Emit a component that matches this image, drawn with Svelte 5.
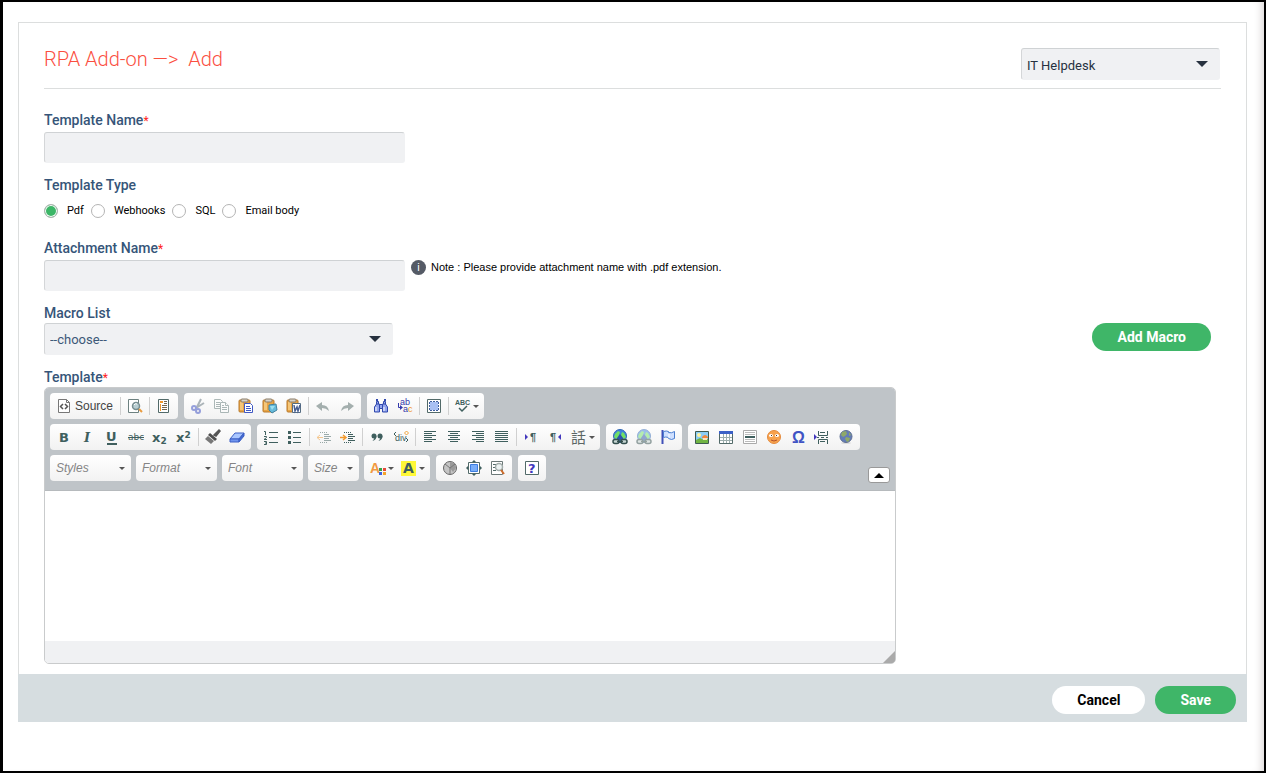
<script>
	let helpdesk = $state('IT Helpdesk');
	let templateName = $state('');
	let templateType = $state('Pdf');
	let attachmentName = $state('');
	let macro = $state('');
	let template = $state('');
	let collapsed = $state(false);

	const types = ['Pdf', 'Webhooks', 'SQL', 'Email body'];

	const teal = '#3f5f5e';
	const clipboard =
		'<rect x="1" y="2" width="11" height="12" rx="1" fill="#e8a445" stroke="#b8792a"/><path d="M2 4h3v8H2z" fill="#f5c678"/><rect x="3" y="1" width="7" height="3" rx="1" fill="#d8d2c8" stroke="#8a7c68"/>';
	const clip = (inner) => clipboard + inner;
	const lines = (rows) =>
		`<path d="${rows.map(([x, w], i) => `M${x} ${2 + i * 2 + 0.5}h${w}`).join('')}" stroke="${teal}"/>`;
	const globe = (opacity) => `<g opacity="${opacity}">
		<circle cx="8" cy="7" r="6.5" fill="#3f83dc" stroke="#3168b4"/>
		<path d="M3 5l3-3 2 1-1 3-1 3-2 1-2-2zM10 3l2 1 2 4-2 2-2-2-1-2z" fill="#72e064"/>
		<path d="M5 9l3-4 3 4v2H5z" fill="#2c55a8"/>
		<rect x="1" y="10.5" width="6" height="4" rx="2" fill="#c7d6d3" stroke="#35504f" stroke-width="1.5"/>
		<rect x="9" y="10.5" width="6" height="4" rx="2" fill="#c7d6d3" stroke="#35504f" stroke-width="1.5"/>
		<path d="M5 12.5h6" stroke="#35504f" stroke-width="1.5"/></g>`;

	const icons = {
		source: '<path d="M2.5 1.5h8l3 3v10h-11z" fill="#fff" stroke="#777"/><path d="M10.5 1.5v3h3" fill="none" stroke="#777"/><path d="M7 6L4.500 8.500 7 11M9 6l2.500 2.500L9 11" fill="none" stroke="#555" stroke-width="1.500"/>',
		preview: '<path d="M1.5 1.500h10v13h-10z" fill="#fff" stroke="#6d8180"/><circle cx="9" cy="8" r="3.500" fill="#b9ced2" stroke="#788e91" stroke-width="1.500"/><path d="M7 7q1-2 3-1" stroke="#fff" fill="none"/><path d="M12 11l3 3" stroke="#e99b3f" stroke-width="2"/>',
		templates: '<path d="M2.500 1.500h10v13h-10z" fill="#fff" stroke="#526a69"/><path d="M4 3h3v2H4z" fill="#f0982d"/><path d="M8 3.500h3M8 5.500h3M6 7.500h5M6 9.500h5M6 11.500h5" stroke="#76664d"/><path d="M4.500 6v7" stroke="#f0982d"/>',
		cut: '<g opacity=".5"><path d="M11 1L7 9M14 5L6 10" stroke="#60717a" stroke-width="2"/><circle cx="4" cy="10" r="2" fill="none" stroke="#3549c0" stroke-width="2"/><circle cx="8" cy="13" r="2" fill="none" stroke="#3549c0" stroke-width="2"/></g>',
		copy: '<g opacity=".5" fill="#fff" stroke="#607877"><path d="M.5 1.500h6l2 2v7h-8z"/><path d="M2 4.500h4M2 6.500h4M2 8.500h4"/><path d="M6.500 4.500h5l3 3v7h-8z"/><path d="M11.500 4.500v3h3M8 7.500h2M8 9.500h5M8 11.500h5"/></g>',
		paste: clip('<path d="M6.500 5.500h6l2 2v7h-8z" fill="#fff" stroke="#4059c4"/><path d="M8 8.500h4M8 10.500h5M8 12.500h5" stroke="#4059c4"/>'),
		pastetext: clip('<path d="M7 7l7-1 1 6-5 3-3-3z" fill="#66bada" stroke="#4283a0"/><path d="M8 8h5l-3 4" fill="#9de0ef"/>'),
		pasteword: clip('<path d="M6.500 5.500h8v9h-8z" fill="#fff" stroke="#566d82"/><path d="M8 7l1 6 2-4 1 4 2-6" fill="none" stroke="#485f92" stroke-width="1.500"/>'),
		undo: '<path d="M1 8l6-4v3q6 0 7 6-3-3-7-3v3z" fill="#a4afae"/>',
		redo: '<path d="M15 8L9 4v3q-6 0-7 6 3-3 7-3v3z" fill="#a4afae"/>',
		find: '<g fill="#93a5ed" stroke="#3048ad"><path d="M3.500 3.500h2v3h-2zM10.500 3.500h2v3h-2z"/><path d="M3.500 6l-2 3v5h5V6zM12.500 6l2 3v5h-5V6z"/><path d="M6.500 6.500h3v4h-3z"/></g><path d="M3 9v4M11 9v4" stroke="#fff"/><path d="M4 1v2M12 1v2" stroke="#3048ad" stroke-width="2"/>',
		replace: '<text x="3" y="7" font-size="9" fill="#3338ac">ab<tspan x="6" dy="7">a</tspan><tspan fill="#ef962c">c</tspan></text><path d="M1.500 5v4.500H4" fill="none" stroke="#3338ac"/><path d="M3 7l3 2.500L3 12z" fill="#3338ac"/>',
		selectall: '<path d="M1.500 1.500h13v13h-13z" fill="#fff" stroke="#526a69"/><rect x="4" y="4" width="8" height="8" fill="#a9c0f3"/><path d="M3.500 4v8M12.500 4v8M4 3.500h8M4 12.500h8" stroke="#3f5f9e" stroke-dasharray="2 1"/>',
		bold: `<text x="3" y="13" font-size="13" font-weight="900" font-family="DejaVu Sans" fill="${teal}">B</text>`,
		italic: `<text x="4" y="13" font-size="13" font-weight="700" font-style="italic" font-family="DejaVu Serif" fill="${teal}">I</text>`,
		underline: `<text x="2" y="12" font-size="13" font-weight="700" font-family="DejaVu Sans" fill="${teal}">U</text><path d="M3 15h10" stroke="${teal}" stroke-width="2"/>`,
		strike: `<text x="0" y="11" font-size="9" font-family="DejaVu Sans" fill="${teal}">abc</text><path d="M0 8.500h16" stroke="${teal}"/>`,
		sub: `<text x="0" y="13" font-size="13" font-weight="700" font-family="DejaVu Sans" fill="${teal}">x<tspan font-size="9" dy="2">2</tspan></text>`,
		sup: `<text x="0" y="13" font-size="13" font-weight="700" font-family="DejaVu Sans" fill="${teal}">x<tspan font-size="9" dy="-4">2</tspan></text>`,
		brush: '<path d="M14 1l1 1-4 5-2-1z" fill="#555" stroke="#555" stroke-width="1.500"/><path d="M5 4l7 6-2 2-7-6z" fill="#4e4e4e"/><path d="M3 7l6 5-3 3-6-5z" fill="#777"/>',
		eraser: '<path d="M6 4h9l-5 6H1z" fill="#a9c6ff" stroke="#3c5fc5"/><path d="M1 10h9v3H1z" fill="#6f94ee" stroke="#3c5fc5"/><path d="M10 10l5-6v3l-5 6z" fill="#446bd2" stroke="#3c5fc5"/>',
		numbered: `<path d="M1 2.500h1.500V6M1 7.500h2.500v1L1 10.500h3M1 12.500h2.500v3H1M2 14h1" fill="none" stroke="${teal}"/><path d="M6 3.500h9M6 8.500h9M6 13.500h9" stroke="${teal}"/>`,
		bulleted: `<path d="M1 2h3v3H1zM1 7h3v3H1zM1 12h3v3H1z" fill="${teal}"/><path d="M6 3.500h8M6 8.500h8M6 13.500h8" stroke="${teal}"/>`,
		outdent: `<g opacity=".5"><path d="M4 3.500h8M4 13.500h8" stroke="${teal}" stroke-dasharray="1 1"/><path d="M8 5.500h5M8 7.500h7M8 9.500h5M8 11.500h7" stroke="${teal}"/><path d="M7 8.500H1M4 6L1 8.500 4 11" fill="none" stroke="#f39a2d"/></g>`,
		indent: `<path d="M4 3.500h8M4 13.500h8" stroke="${teal}" stroke-dasharray="1 1"/><path d="M8 5.500h5M8 7.500h7M8 9.500h5M8 11.500h7" stroke="${teal}"/><path d="M0 8.500h6M3 6l3 2.500L3 11" fill="none" stroke="#f39a2d" stroke-width="1.500"/>`,
		quote: `<g fill="${teal}"><circle cx="5" cy="7" r="2.500"/><path d="M7.500 7q0 4-4 5 2-2 2-4z"/><circle cx="11" cy="7" r="2.500"/><path d="M13.500 7q0 4-4 5 2-2 2-4z"/></g>`,
		div: `<text x="2" y="12" font-size="9" fill="${teal}">div</text><path d="M3 3L1 5l2 2M13 9l2 2-2 2" fill="none" stroke="${teal}"/><path d="M13.500 2l2 2-2 2-2-2z" fill="none" stroke="#f0a33a"/>`,
		left: lines([[2, 12], [2, 8], [2, 12], [2, 8], [2, 12], [2, 8]]),
		center: lines([[2, 12], [4, 8], [2, 12], [4, 8], [2, 12], [4, 8]]),
		right: lines([[2, 12], [6, 8], [2, 12], [6, 8], [2, 12], [6, 8]]),
		justify: lines([[1, 13], [1, 13], [1, 13], [1, 13], [1, 13], [1, 13]]),
		ltr: `<path d="M2 5l3 3-3 3z" fill="#4338bd"/><text x="7" y="12" font-size="11" font-weight="700" fill="${teal}">¶</text>`,
		rtl: `<text x="3" y="12" font-size="11" font-weight="700" fill="${teal}">¶</text><path d="M14 5l-3 3 3 3z" fill="#4338bd"/>`,
		language: '<text x="0" y="14" font-size="15" font-family="Noto Sans CJK TC" fill="#5b6665">話</text>',
		link: globe(1),
		unlink: globe(0.5),
		anchor: '<path d="M2.500 1v14" stroke="#4050b8" stroke-width="2"/><path d="M3.500 2.500q3-1 5 0v1q3 1 6-1v7q-3 2-6 0v-1q-3-1-5 0z" fill="#cfe0ff" stroke="#4c7fd0"/><path d="M9 5v4" stroke="#fff"/>',
		image: '<path d="M1.500 2.500h13v12h-13z" fill="#8bcdf6" stroke="#3d5a50"/><path d="M2 11l4-2 4 2 4-1v4H2z" fill="#70b443"/><circle cx="5" cy="6" r="2" fill="#fff2a0"/><path d="M8 8q3-4 6 0v1H8z" fill="#ef883e"/><path d="M9 9h4v2H9z" fill="#ffe2bd"/>',
		table: '<path d="M1.500 2.500h13v12h-13z" fill="#fff" stroke="#526a69"/><path d="M2 8.500h12M2 11.500h12M5.500 5v9M8.500 5v9M11.500 5v9" stroke="#9daead"/><path d="M1 2h14v3H1z" fill="#3c61c6"/>',
		hr: '<path d="M1.500 1.500h13v13h-13z" fill="#fff" stroke="#aaa"/><path d="M3 3.500h10M3 5.500h10M3 10.500h10M3 12.500h10" stroke="#bbb"/><path d="M3 8h10" stroke="#3f5f5e" stroke-width="2"/>',
		smiley: '<circle cx="8" cy="8" r="6.500" fill="#f7a24d" stroke="#e58a3c"/><ellipse cx="5" cy="6.500" rx="2" ry="1.500" fill="#fff"/><ellipse cx="11" cy="6.500" rx="2" ry="1.500" fill="#fff"/><path d="M5 6h1v1H5zM10 6h1v1h-1z" fill="#463525"/><path d="M5 11q3 2 6 0" fill="none" stroke="#b3522c"/>',
		omega: '<text x="2" y="14" font-size="16" font-weight="700" fill="#4053c4">Ω</text>',
		pagebreak: `<path d="M0 5l3 3-3 3z" fill="#4338bd"/><path d="M4.500 2v4.500h9V2M6 3.500h5M3 8.500h2M7 8.500h3M12 8.500h2M4.500 15v-4.500h9V15M6 12.500h5" fill="none" stroke="${teal}"/>`,
		iframe: '<ellipse cx="8" cy="14" rx="5" ry="1" fill="#ddd"/><circle cx="8" cy="7.500" r="6" fill="#637cb8" stroke="#5f6f91"/><path d="M4 3l4-1 1 3-2 2-2 1-2-2zM8 8l4 1-1 3-2 1-2-3zM11 3l2 3-2 1z" fill="#8fa968"/>',
		blocks: '<circle cx="8" cy="8" r="6.500" fill="#c4c4c4" stroke="#666"/><path d="M8 8V2q6 0 6 6l-3 4z" fill="#999"/><path d="M3 4l5 4v6M8 8l5-4" fill="none" stroke="#777"/>',
		maximize: '<path d="M2.500 2.500h11v11h-11z" fill="#fff" stroke="#526a69"/><path d="M4.500 4.500h7v7h-7z" fill="#79aef9" stroke="#3c7de0"/><path d="M8 0l2 2H6zM8 16l2-2H6zM0 8l2-2v4zM16 8l-2-2v4z" fill="#3f5f5e"/>',
		search: '<path d="M1.500 1.500h11v13h-11z" fill="#fff" stroke="#6c7978"/><path d="M3 4.500h3M3 7.500h2M3 10.500h3" stroke="#526a69"/><circle cx="9" cy="7" r="3.500" fill="#edf3f3" stroke="#a3adab" stroke-width="1.500"/><path d="M11 10l3 4" stroke="#cf6d2c" stroke-width="2"/>',
		about: '<path d="M1.500 1.500h13v13h-13z" fill="#fff" stroke="#526a69"/><text x="4" y="13" font-size="13" font-weight="700" font-family="DejaVu Sans" fill="#4037bd">?</text>',
		spell: `<text x="0" y="7" font-size="7" font-weight="700" fill="${teal}">ABC</text><path d="M4 10l3 3 5-5" fill="none" stroke="${teal}" stroke-width="1.500"/>`,
		textcolor: '<text x="0" y="13" font-size="14" font-weight="700" fill="#f19a43">A</text><path d="M9 8h3v3H9z" fill="#35a546"/><path d="M13 8h3v3h-3z" fill="#e64839"/><path d="M9 12h3v3H9z" fill="#3e62df"/><path d="M13 12h3v3h-3z" fill="#f3a42c"/>',
		bgcolor: '<path d="M0 1h15v15H0z" fill="#fff838"/><text x="2" y="13" font-size="14" font-weight="700" font-family="DejaVu Sans" fill="#3f5f5e">A</text>'
	};

	// '|' is a separator, a trailing 'v' marks a button that opens a menu
	const rows = [
		[
			['source', '|', 'preview', '|', 'templates'],
			['cut', 'copy', 'paste', 'pastetext', 'pasteword', '|', 'undo', 'redo'],
			['find', 'replace', '|', 'selectall', '|', 'spell v']
		],
		[
			['bold', 'italic', 'underline', 'strike', 'sub', 'sup', '|', 'brush', 'eraser'],
			['numbered', 'bulleted', '|', 'outdent', 'indent', '|', 'quote', 'div', '|', 'left', 'center', 'right', 'justify', '|', 'ltr', 'rtl', 'language v'],
			['link', 'unlink', 'anchor'],
			['image', 'table', 'hr', 'smiley', 'omega', 'pagebreak', 'iframe']
		],
		[
			['textcolor v', 'bgcolor v'],
			['blocks', 'maximize', 'search'],
			['about']
		]
	];
	const combos = ['Styles', 'Format', 'Font', 'Size'];
</script>

{#snippet tool(item)}
	{@const [name, menu] = item.split(' ')}
	{#if name === '|'}
		<span class="separator"></span>
	{:else}
		<button type="button" class="tool" class:menu class:source={name === 'source'} aria-label={name}>
			<svg width="16" height="16" viewBox="0 0 16 16" aria-hidden="true">{@html icons[name]}</svg>
			{#if name === 'source'}<span>Source</span>{/if}
			{#if menu}<i class="caret"></i>{/if}
		</button>
	{/if}
{/snippet}

<div class="page">
	<form class="card" onsubmit={(e) => e.preventDefault()}>
		<div class="body">
			<header>
				<h1>RPA Add-on —&gt;&nbsp; Add</h1>
				<div class="select desk">
					<select bind:value={helpdesk} aria-label="Helpdesk">
						<option>IT Helpdesk</option>
					</select>
				</div>
			</header>

			<div class="field">
				<label class="title" for="name">Template Name<em>*</em></label>
				<input class="text" id="name" type="text" bind:value={templateName} />
			</div>

			<fieldset>
				<legend class="title">Template Type</legend>
				<div class="radios">
					{#each types as type}
						<label><input type="radio" name="type" value={type} bind:group={templateType} />{type}</label>
					{/each}
				</div>
			</fieldset>

			<div class="field">
				<label class="title" for="attachment">Attachment Name<em>*</em></label>
				<div class="attachment">
					<input class="text" id="attachment" type="text" bind:value={attachmentName} />
					<p class="note"><span class="info">i</span>Note : Please provide attachment name with .pdf extension.</p>
				</div>
			</div>

			<div class="field">
				<label class="title tight" for="macro">Macro List</label>
				<div class="macro">
					<div class="select list">
						<select id="macro" bind:value={macro}>
							<option value="">--choose--</option>
						</select>
					</div>
					<button type="button" class="pill green">Add Macro</button>
				</div>
			</div>

			<label class="title tight" for="template">Template<em>*</em></label>
			<div class="editor">
				<div class="toolbar">
					{#each rows as row, i}
						{#if !collapsed || i === 2}
							<div class="row">
								{#if i === 2}
									<div class="combos">
										{#each combos as combo}
											<div class="combo" class:small={combo === 'Size'}>
												<select aria-label={combo}><option>{combo}</option></select>
												<i class="caret"></i>
											</div>
										{/each}
									</div>
								{/if}
								{#each row as group}
									<div class="group">
										{#each group as item}
											{@render tool(item)}
										{/each}
									</div>
								{/each}
								{#if i === 2}
									<button type="button" class="collapse" aria-label="Collapse toolbar" onclick={() => (collapsed = !collapsed)}></button>
								{/if}
							</div>
						{/if}
					{/each}
				</div>
				<textarea id="template" bind:value={template}></textarea>
				<div class="status"></div>
			</div>
		</div>

		<footer>
			<button type="button" class="pill">Cancel</button>
			<button type="submit" class="pill green">Save</button>
		</footer>
	</form>
</div>

<style>
	:global(body) {
		margin: 0;
		background: #fff;
		font-family: Roboto, sans-serif;
	}

	* {
		box-sizing: border-box;
	}

	button,
	input,
	select,
	textarea {
		font-family: inherit;
		margin: 0;
	}

	.page {
		min-height: 100vh;
		padding: 20px 17px 48px 15px;
		border: 2px solid #000;
		border-left-width: 3px;
		box-shadow: inset -8px 0 8px -6px #d8d4d4;
	}

	.card {
		border: 1px solid #dcdede;
		border-bottom: 0;
	}

	.body {
		padding: 25px 25px 10px;
	}

	header {
		display: flex;
		justify-content: space-between;
		padding: 0 1px 8px 0;
		margin-bottom: 23px;
		border-bottom: 1px solid #dcdede;
	}

	h1 {
		margin: 0;
		font-size: 20px;
		line-height: 22px;
		font-weight: 300;
		color: #fb4f3f;
	}

	.select {
		position: relative;
		height: 32px;
	}

	.select::after {
		content: '';
		position: absolute;
		right: 12px;
		top: 13px;
		border: 6px solid transparent;
		border-top-color: #27313f;
		border-bottom: 0;
		pointer-events: none;
	}

	.select select {
		width: 100%;
		height: 100%;
		padding: 2px 5px 0;
		appearance: none;
		font-size: 13px;
		color: #27313f;
	}

	.select select,
	.text {
		background: #f0f1f3;
		border: 1px solid #f0f1f3;
		border-top-color: #cfd2d4;
		border-left-color: #d4d6d8;
		border-radius: 3px;
	}

	.desk {
		width: 199px;
	}

	.list {
		width: 349px;
	}

	.list select {
		padding-top: 0;
		color: #3c5878;
	}

	.title {
		display: block;
		height: 20px;
		padding: 0;
		font-size: 14px;
		line-height: 17px;
		font-weight: 500;
		color: #365579;
	}

	.tight {
		height: 18px;
	}

	.title em {
		font-size: 12px;
		font-style: normal;
		font-weight: 400;
		color: #f22;
	}

	.field {
		margin-bottom: 14px;
	}

	.text {
		display: block;
		width: 361px;
		height: 31px;
	}

	fieldset {
		margin: 0 0 21px;
		padding: 0;
		border: 0;
	}

	.radios {
		display: flex;
		gap: 7px;
		padding-top: 6px;
	}

	.radios label {
		display: flex;
		align-items: center;
		gap: 9px;
		font-size: 11px;
		line-height: 16px;
		color: #000;
	}

	.radios input {
		appearance: none;
		width: 14px;
		height: 14px;
		border: 1px solid #b4b4b4;
		border-radius: 50%;
		background: #fff;
	}

	.radios input:checked {
		background: #3cb667;
		box-shadow: inset 0 0 0 1px #fff;
	}

	.attachment {
		display: flex;
		gap: 6px;
	}

	.note {
		display: flex;
		gap: 5px;
		height: 15px;
		margin: 0;
		font: 11px/15px 'Liberation Sans', Arial, sans-serif;
		color: #000;
	}

	.info {
		width: 15px;
		height: 15px;
		border-radius: 50%;
		background: #555b66;
		color: #fff;
		text-align: center;
	}

	.macro {
		display: flex;
		justify-content: space-between;
		padding-right: 10px;
	}

	.pill {
		height: 28px;
		padding: 0 25px;
		border: 0;
		border-radius: 14px;
		background: #fff;
		font-size: 14px;
		font-weight: 700;
		color: #000;
	}

	.green {
		background: #3fb668;
		color: #fff;
	}

	.editor {
		max-width: 852px;
		border: 1px solid #c9cbcc;
		border-radius: 5px;
		overflow: hidden;
	}

	.toolbar {
		display: flex;
		flex-direction: column;
		gap: 5px;
		padding: 5px 5px 7px;
		background: #bfc4c8;
		border-bottom: 1px solid #b6babd;
	}

	.row {
		display: flex;
		flex-wrap: wrap;
		align-items: flex-start;
		gap: 6px;
	}

	.group {
		display: flex;
		align-items: center;
		height: 26px;
		padding: 0 2px;
	}

	.group,
	.combo {
		background: linear-gradient(#fff, #f2f2f2);
		border-radius: 4px;
	}

	.tool {
		display: flex;
		align-items: center;
		width: 24px;
		height: 26px;
		padding: 0 4px;
		border: 0;
		background: none;
	}

	.tool svg {
		flex: none;
		overflow: visible;
		font-family: 'Liberation Sans', Arial, sans-serif;
	}

	.menu {
		width: 31px;
		gap: 2px;
	}

	.source {
		width: 66px;
		gap: 3px;
		font-family: 'Liberation Sans', Arial, sans-serif;
		font-size: 12px;
		color: #444;
	}

	.separator {
		width: 1px;
		height: 18px;
		margin: 0 2px;
		background: #d0d0d0;
	}

	.caret {
		border: 3px solid transparent;
		border-top-color: #555;
		border-bottom: 0;
	}

	.combos {
		display: flex;
		gap: 5px;
		margin-right: -1px;
	}

	.combo {
		position: relative;
		width: 81px;
		height: 26px;
	}

	.small {
		width: 51px;
	}

	.combo select {
		width: 100%;
		height: 100%;
		padding: 0 6px;
		border: 0;
		appearance: none;
		background: none;
		font: italic 12px 'Liberation Sans', Arial, sans-serif;
		color: #858585;
	}

	.combo .caret {
		position: absolute;
		right: 6px;
		top: 12px;
		pointer-events: none;
	}

	.collapse {
		display: flex;
		align-items: center;
		justify-content: center;
		width: 22px;
		height: 16px;
		margin: 12px 0 0 auto;
		padding: 0;
		border: 1px solid #999;
		border-radius: 3px;
		background: #fff;
	}

	.collapse::before {
		content: '';
		border: 5px solid transparent;
		border-top: 0;
		border-bottom-color: #000;
	}

	textarea {
		display: block;
		width: 100%;
		height: 150px;
		padding: 10px;
		border: 0;
		outline: 0;
		resize: none;
	}

	.status {
		display: flex;
		align-items: flex-end;
		justify-content: flex-end;
		height: 22px;
		background: #f0f1f3;
	}

	.status::after {
		content: '';
		border: 6px solid transparent;
		border-right-color: #aaa;
		border-bottom-color: #aaa;
	}

	footer {
		display: flex;
		justify-content: flex-end;
		gap: 10px;
		margin: 0 -1px;
		padding: 12px 11px 8px;
		background: #d6dde0;
	}
</style>
